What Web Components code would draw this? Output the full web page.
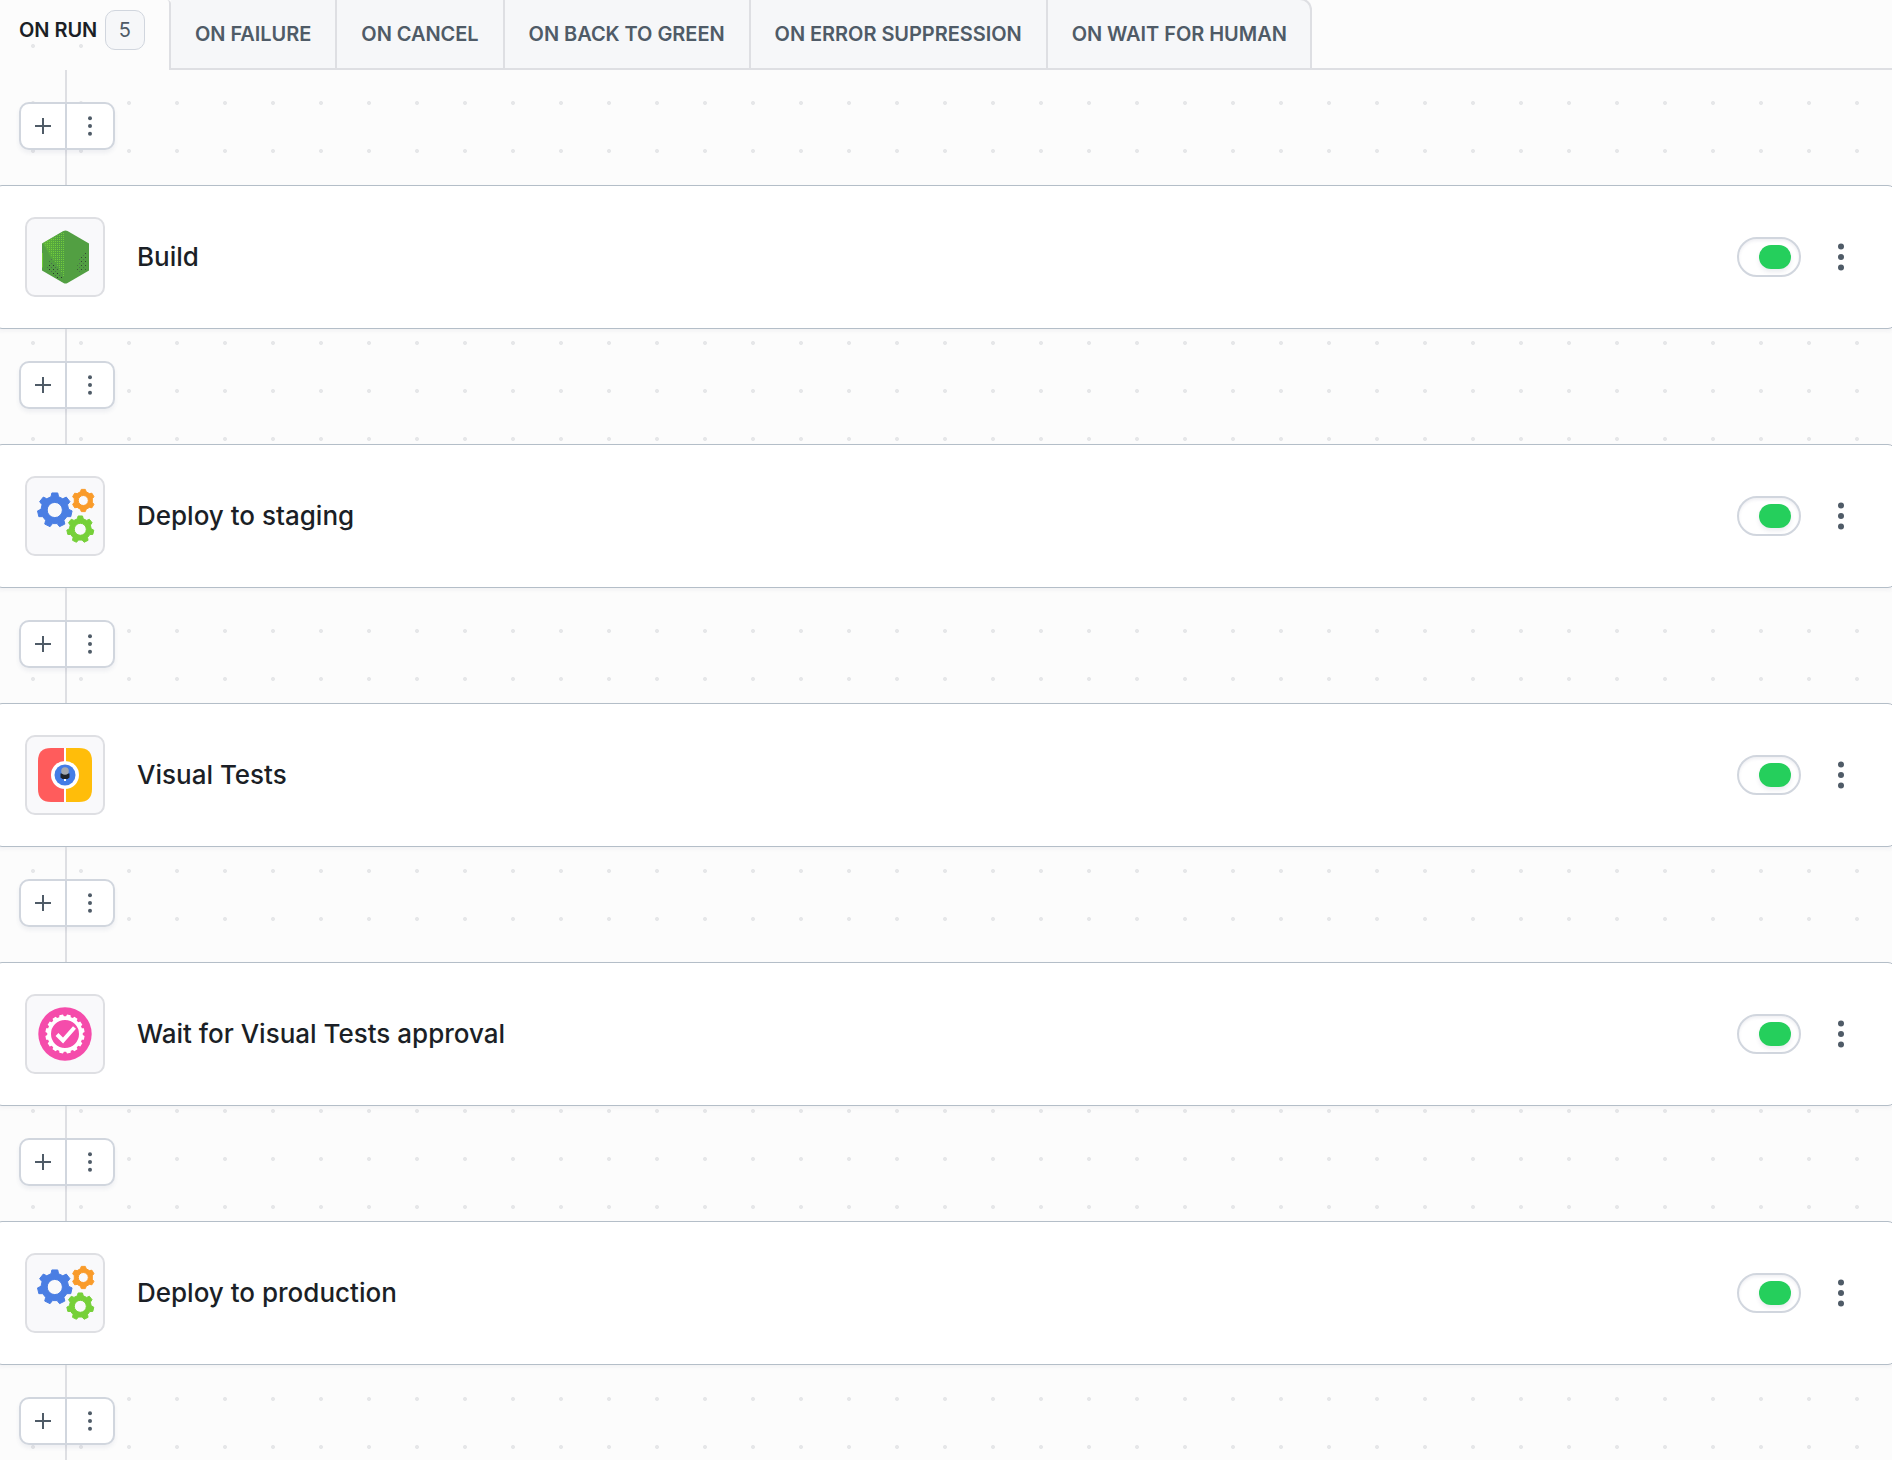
<!DOCTYPE html>
<html lang="en">
<head>
<meta charset="utf-8">
<title>Pipeline actions</title>
<style>
    html, body {
        margin: 0;
        height: 100%;
        overflow: hidden;
    }
    body {
        --line: #dedfe3;
        --border: #d1d6de;
        --muted: #4f5b67;
        --canvas: #fcfcfc;
        background: var(--canvas);
        color: #1b1f26;
        font-family: Inter, "Liberation Sans", sans-serif;
    }
</style>
</head>
<body>
<pipeline-page>
    <trigger-tabs slot="tabs">
        <trigger-tab active count="5">ON RUN</trigger-tab>
        <trigger-tab>ON FAILURE</trigger-tab>
        <trigger-tab>ON CANCEL</trigger-tab>
        <trigger-tab>ON BACK TO GREEN</trigger-tab>
        <trigger-tab>ON ERROR SUPPRESSION</trigger-tab>
        <trigger-tab last>ON WAIT FOR HUMAN</trigger-tab>
    </trigger-tabs>
    <action-connector></action-connector>
    <action-card icon="node">Build</action-card>
    <action-connector></action-connector>
    <action-card icon="gears">Deploy to staging</action-card>
    <action-connector></action-connector>
    <action-card icon="visual">Visual Tests</action-card>
    <action-connector></action-connector>
    <action-card icon="approval">Wait for Visual Tests approval</action-card>
    <action-connector></action-connector>
    <action-card icon="gears">Deploy to production</action-card>
    <action-connector></action-connector>
</pipeline-page>

<script>
/**
 * Outline of a gear with tapered teeth, plus a round hole (needs evenodd fill).
 * @param {number} cx
 * @param {number} cy
 * @param {{teeth: number, outer: number, inner: number, hole: number, top: number, base: number, turn: number}} o
 * @returns {string}
 */
function gearPath(cx, cy, o) {
    const step = Math.PI * 2 / o.teeth;
    const points = [];
    for (let i = 0; i < o.teeth; i++) {
        const a = i * step - Math.PI / 2 + (o.turn || 0);
        [[o.inner, -o.base], [o.outer, -o.top], [o.outer, o.top], [o.inner, o.base]].forEach(([r, t]) => {
            const b = a + t * step;
            points.push((cx + r * Math.cos(b)).toFixed(2) + ' ' + (cy + r * Math.sin(b)).toFixed(2));
        });
    }
    const h = o.hole;
    return `M${points.join('L')}Z M${cx - h} ${cy}a${h} ${h} 0 1 0 ${h * 2} 0a${h} ${h} 0 1 0 ${-h * 2} 0Z`;
}

// every icon is drawn on the 80px tile
const ICONS = {
    node: `
        <defs>
            <linearGradient id="face" x1="0" y1="0.3" x2="1" y2="0.5">
                <stop offset="0" stop-color="#6cc832"/>
                <stop offset="0.52" stop-color="#55a83c"/>
                <stop offset="0.56" stop-color="#529f42"/>
                <stop offset="1" stop-color="#529f42"/>
            </linearGradient>
            <pattern id="light" width="2" height="2" patternUnits="userSpaceOnUse">
                <rect width="1" height="1" fill="#78d63b"/>
            </pattern>
            <pattern id="dark" width="4" height="4" patternUnits="userSpaceOnUse">
                <rect width="1" height="1" fill="#28382b"/>
                <rect x="2" y="2" width="1" height="1" fill="#4d6a54"/>
            </pattern>
        </defs>
        <path d="M42.500 14 64 26.500v27L42.500 66q-2 1-4 0L17 53.500v-27L38.500 14q2-1 4 0Z" fill="#529f42"/>
        <path d="M18 26 38.500 14 42 14v50L38 62 19 28Z" fill="url(#face)" opacity=".5"/>
        <path d="M19 26 40 14v48Z" fill="url(#light)" opacity=".85"/>
        <path d="M17 36v14l1 1v-15Z" fill="#6cc832"/>
        <path d="M21 53 26 41 38 62v3Z" fill="url(#dark)"/>
        <path d="M52 52 54 40 62 32v20l-8 4Z" fill="url(#dark)" opacity=".8"/>`,
    gears: `
        <path fill="#4a7ee3" stroke="#4a7ee3" stroke-linejoin="round" fill-rule="evenodd" d="${gearPath(29.800, 34, { teeth: 7, outer: 17.300, inner: 13.800, hole: 7.600, top: .19, base: .31 })}"/>
        <path fill="#f99b2a" stroke="#f99b2a" stroke-linejoin="round" fill-rule="evenodd" d="${gearPath(58.300, 24.500, { teeth: 6, outer: 11.300, inner: 9.200, hole: 5, top: .17, base: .31 })}"/>
        <path fill="#76d039" stroke="#76d039" stroke-linejoin="round" fill-rule="evenodd" d="${gearPath(55.300, 53.300, { teeth: 7, outer: 13.500, inner: 10.900, hole: 6, top: .18, base: .31 })}"/>`,
    visual: `
        <path d="M39 13v54H26q-13 0-13-13V26q0-13 13-13Z" fill="#ff5c5c"/>
        <path d="M41 13v54h13q13 0 13-13V26q0-13-13-13Z" fill="#ffbd0a"/>
        <path d="M39 13h2v54h-2Z" fill="#fff"/>
        <circle cx="40" cy="40" r="14" fill="#fff"/>
        <circle cx="40" cy="40" r="10.500" fill="#447de6"/>
        <path d="M35.500 38.500h9v4l-2 1.500h-5l-2-1.500Z" fill="#1f242b"/>
        <circle cx="40" cy="36" r="3.800" fill="#a4a9b0"/>
        <path d="M39 44h2v2h-2Z" fill="#fff"/>`,
    approval: `
        <circle cx="40" cy="40" r="26.700" fill="#f54cab"/>
        <path fill="#fff" fill-rule="evenodd" d="${gearPath(40, 40, { teeth: 16, outer: 19.700, inner: 17.800, hole: 14, top: .24, base: .34, turn: Math.PI / 16 })}"/>
        <path d="m32 40.500 6 6L49.500 33.500" fill="none" stroke="#fff" stroke-width="4"/>`
};

class PipelinePage extends HTMLElement {
    constructor() {
        super();
        this.attachShadow({ mode: 'open' });
        this.shadowRoot.innerHTML = `
        <style>
            :host {
                display: flex;
                flex-direction: column;
                height: 100vh;
                overflow: hidden;
            }
            main {
                flex: 1;
                min-height: 0;
                overflow: hidden;
                background: radial-gradient(circle at 24px 24px, #e6e7e9 1.700px, transparent 2.300px) 9px 9px / 48px 48px;
            }
        </style>
        <slot name="tabs"></slot>
        <main><slot></slot></main>
        `;
    }
}

class TriggerTabs extends HTMLElement {
    constructor() {
        super();
        this.attachShadow({ mode: 'open' });
        this.shadowRoot.innerHTML = `
        <style>
            :host {
                display: flex;
                flex: none;
                height: 70px;
            }
            .rest {
                flex: 1;
                border-bottom: 2px solid var(--line);
            }
        </style>
        <slot></slot>
        <div class="rest"></div>
        `;
    }
}

class TriggerTab extends HTMLElement {
    constructor() {
        super();
        this.attachShadow({ mode: 'open' });
        this.shadowRoot.innerHTML = `
        <style>
            :host {
                display: flex;
                align-items: center;
                box-sizing: border-box;
                height: 70px;
                padding: 0 24px 1px 24px;
                border-right: 2px solid var(--line);
                border-bottom: 2px solid var(--line);
                background: #f6f7f9;
                color: var(--muted);
                font-size: 20px;
                font-weight: 600;
                letter-spacing: -0.05px;
                line-height: 24px;
                white-space: nowrap;
            }
            :host([active]) {
                width: 171px;
                padding: 0 0 10px 19px;
                border-bottom: 0;
                border-top-right-radius: 4px;
                background: radial-gradient(circle at 24px 24px, #e6e7e9 1.700px, transparent 2.300px) 9px 22px / 48px 48px;
                background-repeat: repeat-x;
                color: #1b1f26;
            }
            /* top edge sits just above the page, so only the corner arc shows */
            :host([last]) {
                height: 72px;
                margin-top: -2px;
                padding-right: 23px;
                border-top: 2px solid var(--line);
                border-top-right-radius: 12px;
            }
            .count {
                box-sizing: border-box;
                width: 40px;
                height: 40px;
                margin-left: 8px;
                padding-right: 1px;
                border: 1px solid var(--border);
                border-radius: 10px;
                background: #f6f7f9;
                color: var(--muted);
                font-weight: 400;
                line-height: 38px;
                text-align: center;
            }
        </style>
        <slot></slot>
        `;
    }

    connectedCallback() {
        if (!this.hasAttribute('count')) return;
        const count = document.createElement('span');
        count.classList.add('count');
        count.textContent = this.getAttribute('count');
        this.shadowRoot.appendChild(count);
    }
}

class ActionConnector extends HTMLElement {
    constructor() {
        super();
        this.attachShadow({ mode: 'open' });
        this.shadowRoot.innerHTML = `
        <style>
            :host {
                display: block;
                box-sizing: border-box;
                height: 115px;
                padding: 32px 0 0 19px;
                background: linear-gradient(var(--line), var(--line)) 65px 0 / 2px 100% no-repeat;
            }
            .group {
                display: flex;
                box-sizing: border-box;
                width: 96px;
                height: 48px;
                border: 2px solid var(--border);
                border-radius: 10px;
                background: #fff;
                box-shadow: 0 3px 4px rgba(60, 70, 110, .07);
            }
            button {
                display: flex;
                align-items: center;
                justify-content: center;
                flex: 1;
                padding: 0;
                border: 0;
                background: none;
                color: var(--muted);
            }
            button:first-child {
                flex: none;
                width: 46px;
                border-right: 2px solid var(--border);
            }
        </style>
        <div class="group">
            <button aria-label="Add action">
                <svg width="16" height="16" viewBox="0 0 16 16"><path d="M8 0v16M0 8h16" stroke="currentColor" stroke-width="2"/></svg>
            </button>
            <button aria-label="More">
                <svg width="4" height="20" viewBox="0 0 4 20" fill="currentColor"><circle cx="2" cy="2.200" r="2"/><circle cx="2" cy="10" r="2"/><circle cx="2" cy="17.800" r="2"/></svg>
            </button>
        </div>
        `;
    }
}

class ToggleSwitch extends HTMLElement {
    constructor() {
        super();
        this.attachShadow({ mode: 'open' });
        this.shadowRoot.innerHTML = `
        <style>
            :host {
                display: flex;
                align-items: center;
                justify-content: flex-end;
                box-sizing: border-box;
                width: 64px;
                height: 40px;
                padding-right: 8px;
                border: 2px solid var(--border);
                border-radius: 20px;
                background: #fff;
                box-shadow: inset 0 2px 3px rgba(60, 70, 110, .08);
            }
            span {
                width: 32px;
                height: 24px;
                border-radius: 12px;
                background: #25cf5c;
                box-shadow: 0 3px 4px rgba(60, 70, 110, .1);
            }
        </style>
        <span></span>
        `;
    }
}

class ActionCard extends HTMLElement {
    constructor() {
        super();
        this.attachShadow({ mode: 'open' });
        this.shadowRoot.innerHTML = `
        <style>
            :host {
                display: flex;
                align-items: center;
                box-sizing: border-box;
                height: 144px;
                margin: 0 -4px 0 -6px;
                padding: 0 51px 0 30px;
                border: 1px solid #b4bec8;
                border-radius: 8px;
                background: #fff;
                box-shadow: 0 2px 4px rgba(60, 70, 110, .06);
                font-size: 26px;
                font-weight: 500;
                line-height: 32px;
            }
            .tile {
                box-sizing: border-box;
                width: 80px;
                height: 80px;
                margin-right: 32px;
                border: 2px solid var(--line);
                border-radius: 10px;
                background: #f9f9fb;
            }
            .tile svg {
                display: block;
                margin: -2px;
            }
            .title {
                flex: 1;
            }
            .more {
                margin-left: 37px;
                color: var(--muted);
            }
        </style>
        <div class="tile"></div>
        <div class="title"><slot></slot></div>
        <toggle-switch></toggle-switch>
        <svg class="more" width="6" height="28" viewBox="0 0 6 28" fill="currentColor"><circle cx="3" cy="3.500" r="3"/><circle cx="3" cy="14" r="3"/><circle cx="3" cy="24.500" r="3"/></svg>
        `;
    }

    connectedCallback() {
        const icon = ICONS[this.getAttribute('icon')];
        this.shadowRoot.querySelector('.tile').innerHTML = `<svg width="80" height="80" viewBox="0 0 80 80">${icon}</svg>`;
    }
}

customElements.define('pipeline-page', PipelinePage);
customElements.define('trigger-tabs', TriggerTabs);
customElements.define('trigger-tab', TriggerTab);
customElements.define('action-connector', ActionConnector);
customElements.define('toggle-switch', ToggleSwitch);
customElements.define('action-card', ActionCard);
</script>
</body>
</html>
